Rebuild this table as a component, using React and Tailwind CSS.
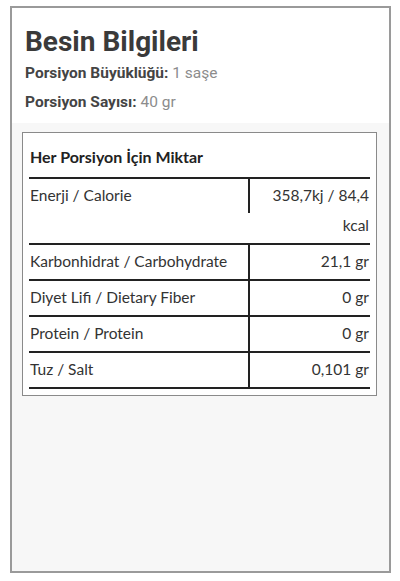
import React from "react";

const rows = [
  { label: "Karbonhidrat / Carbohydrate", value: "21,1 gr" },
  { label: "Diyet Lifi / Dietary Fiber", value: "0 gr" },
  { label: "Protein / Protein", value: "0 gr" },
  { label: "Tuz / Salt", value: "0,101 gr" },
];

const App = () => {
  return (
    <div className="w-[400px] h-[581px] bg-white pt-[6px] pl-[10px]">
      <div className="w-[381px] h-[567px] border-2 border-[#9a9a9a] bg-[#f7f7f7] flex flex-col">
        {/* Header */}
        <div className="bg-white pl-[13px] pt-[14px] pb-[10px] font-['Roboto',sans-serif]">
          <h1 className="text-[28px] leading-[40px] font-bold text-[#3a3a3a]">Besin Bilgileri</h1>
          <p className="text-[15.5px] leading-[22px] text-[#444]">
            <span className="font-bold">Porsiyon Büyüklüğü:</span>{" "}
            <span className="text-[#8c8c8c]">1 saşe</span>
          </p>
          <p className="mt-[7px] text-[15.5px] leading-[22px] text-[#444]">
            <span className="font-bold">Porsiyon Sayısı:</span>{" "}
            <span className="text-[#8c8c8c]">40 gr</span>
          </p>
        </div>

        {/* Table */}
        <div className="pt-[9px] pl-[10px]">
          <div className="w-[355px] border border-[#8a8a8a] bg-white px-[6px] pb-[6px] font-['Lato',sans-serif] text-[15.5px] text-[#333]">
            <div className="h-[46px] flex items-end pb-[10px] pl-[1px] border-b-2 border-[#222]">
              <span className="text-[16px] font-bold leading-[20px] text-[#222]">Her Porsiyon İçin Miktar</span>
            </div>
            <div className="flex border-b-2 border-[#222]">
              <div className="w-[221px] h-[34px] self-start border-r-2 border-[#222] pt-[1px] pl-[1px] leading-[30px]">
                Enerji / Calorie
              </div>
              <div className="flex-1 text-right pt-[1px] pb-[3px] pr-[1px] leading-[30px]">
                <div>358,7kj / 84,4</div>
                <div>kcal</div>
              </div>
            </div>
            {rows.map((r, i) => (
              <div key={i} className="flex h-[36px] border-b-2 border-[#222]">
                <div className="w-[221px] border-r-2 border-[#222] flex items-center pl-[1px]">{r.label}</div>
                <div className="flex-1 flex items-center justify-end pr-[1px]">{r.value}</div>
              </div>
            ))}
          </div>
        </div>
      </div>
    </div>
  );
};

export default App;
